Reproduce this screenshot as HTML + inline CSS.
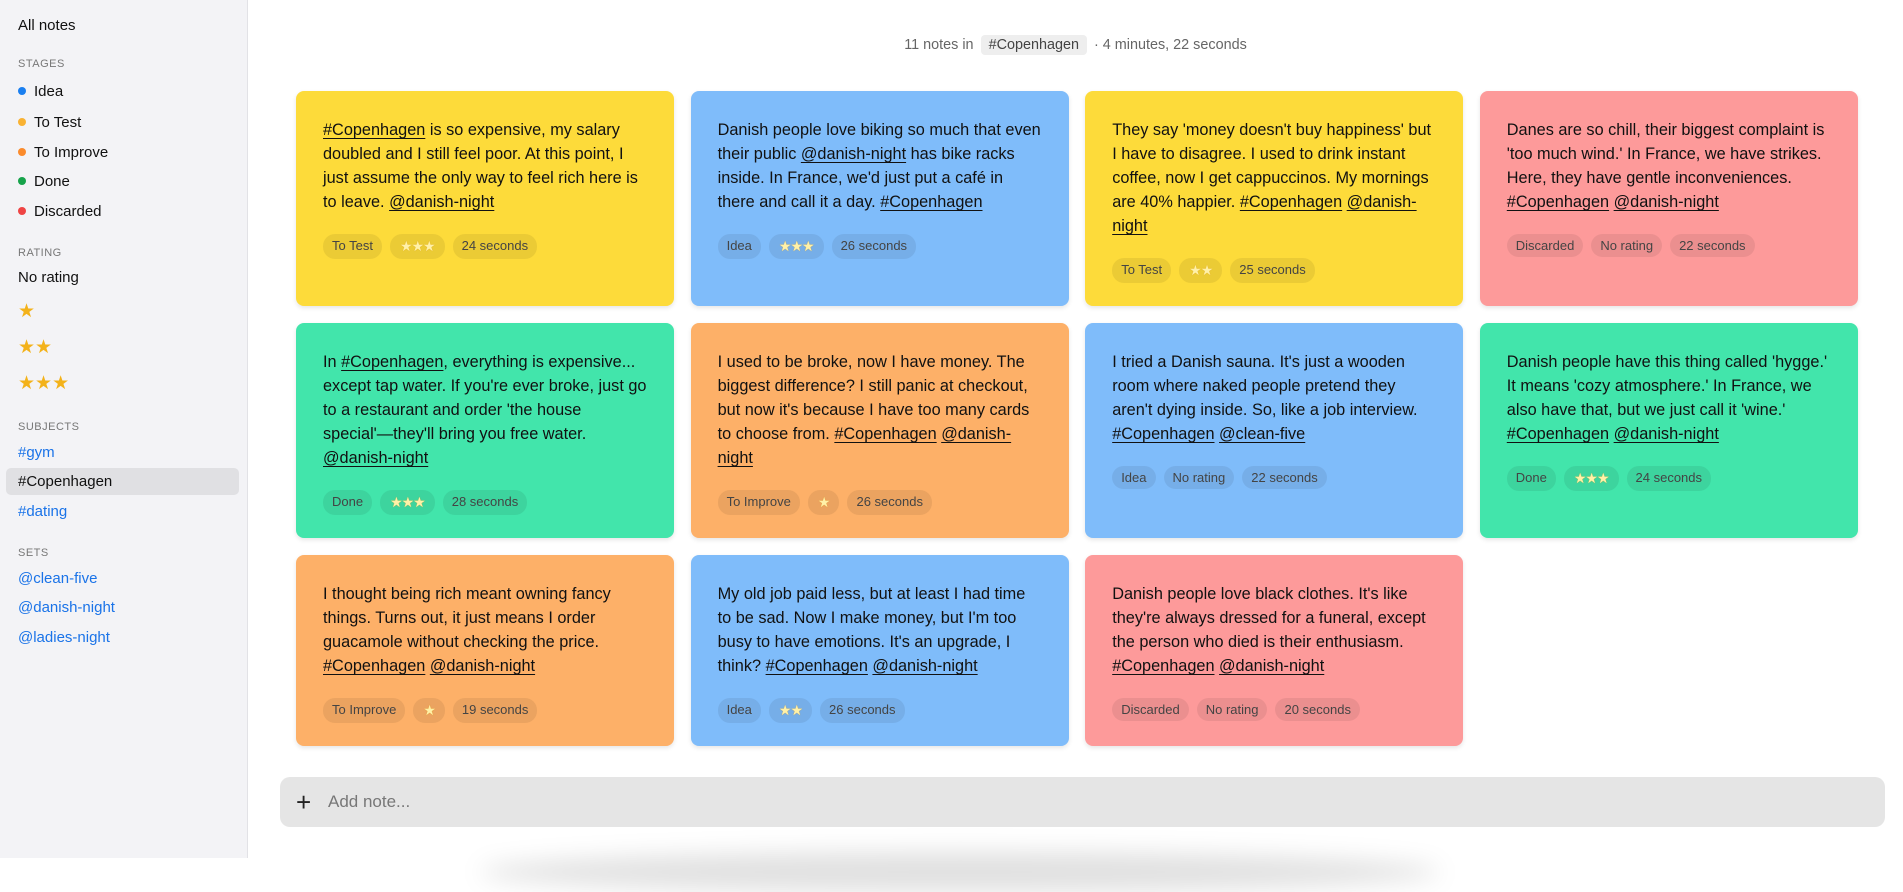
<!DOCTYPE html>
<html><head><meta charset="utf-8"><style>
*{box-sizing:border-box;margin:0;padding:0}
body{width:1903px;height:858px;overflow:hidden;background:#fff;font-family:"Liberation Sans",sans-serif;color:#111;position:relative}
#sb{position:absolute;left:0;top:0;width:248px;height:858px;background:#f3f3f6;border-right:1px solid #e2e2e6}
#sb div{position:absolute;left:18px;font-size:15px;line-height:20px;white-space:nowrap}
#sb .h{font-size:11px;color:#777;letter-spacing:.5px}
#sb .b{color:#1a73e8}
#sb .dot{display:inline-block;width:8px;height:8px;border-radius:50%;margin-right:8px;vertical-align:1px}
.st{color:#f3b21a}
#sb #sel{position:absolute;left:6px;top:468px;width:233px;height:27px;background:#e0e0e3;border-radius:5px}
#hd{position:absolute;left:248px;right:0;top:34px;text-align:center;font-size:14.4px;color:#666;line-height:22px}
#hd span{background:#eeeeee;color:#444;border-radius:4px;padding:2px 8px;margin:0 3px}
#grid{position:absolute;left:296px;top:91px;display:grid;grid-template-columns:repeat(4,378px);grid-template-rows:215px 215px 191px;column-gap:16.6px;row-gap:17px}
.c{border-radius:8px;padding:27px 27px;font-size:16.3px;line-height:24px;box-shadow:0 2px 5px rgba(0,0,0,.1)}
.c u{text-decoration:underline;text-underline-offset:3px}
.p{margin-top:20px;display:flex;gap:8px}
.p span{background:rgba(0,0,0,.07);border-radius:12px;font-size:13px;line-height:23px;padding:0 9px;color:#444}
.p span.s{color:#fff1a8;font-size:14px;padding:1px 10px;letter-spacing:-1px;text-shadow:0 0 1px #e0a020}
.y{background:#fddb3a}.bl{background:#7fbcfa}.r{background:#fd9a9a}.g{background:#42e5ab}.o{background:#fdb068}
#add{position:absolute;left:280px;top:777px;width:1605px;height:50px;background:#e5e5e5;border-radius:10px;font-size:17px;color:#777;line-height:50px;padding-left:48px}
#add b{position:absolute;left:16px;top:0;font-weight:normal;color:#222;font-size:26px}
#sh{position:absolute;left:480px;top:852px;width:960px;height:40px;border-radius:50%;background:rgba(0,0,0,.12);filter:blur(12px)}
</style></head><body>
<div id="sb">
<div id="sel"></div>
<div style="top:16px">All notes</div>
<div class="h" style="top:54px">STAGES</div>
<div style="top:82px"><i class="dot" style="background:#1a7ff0"></i>Idea</div>
<div style="top:113px"><i class="dot" style="background:#f9b233"></i>To Test</div>
<div style="top:143px"><i class="dot" style="background:#fb8b2c"></i>To Improve</div>
<div style="top:172px"><i class="dot" style="background:#16a34a"></i>Done</div>
<div style="top:202px"><i class="dot" style="background:#ef4444"></i>Discarded</div>
<div class="h" style="top:243px">RATING</div>
<div style="top:268px">No rating</div>
<div class="st" style="top:302px;font-size:19px">★</div>
<div class="st" style="top:338px;font-size:19px">★★</div>
<div class="st" style="top:374px;font-size:19px">★★★</div>
<div class="h" style="top:417px">SUBJECTS</div>
<div class="b" style="top:443px">#gym</div>
<div style="top:472px">#Copenhagen</div>
<div class="b" style="top:502px">#dating</div>
<div class="h" style="top:543px">SETS</div>
<div class="b" style="top:569px">@clean-five</div>
<div class="b" style="top:598px">@danish-night</div>
<div class="b" style="top:628px">@ladies-night</div>
</div>
<div id="hd">11 notes in <span>#Copenhagen</span> · 4 minutes, 22 seconds</div>
<div id="grid">
<div class="c y"><u>#Copenhagen</u> is so expensive, my salary doubled and I still feel poor. At this point, I just assume the only way to feel rich here is to leave. <u>@danish-night</u><div class="p"><span>To Test</span><span class="s">★★★</span><span>24 seconds</span></div></div>
<div class="c bl">Danish people love biking so much that even their public <u>@danish-night</u> has bike racks inside. In France, we'd just put a café in there and call it a day. <u>#Copenhagen</u><div class="p"><span>Idea</span><span class="s">★★★</span><span>26 seconds</span></div></div>
<div class="c y">They say 'money doesn't buy happiness' but I have to disagree. I used to drink instant coffee, now I get cappuccinos. My mornings are 40% happier. <u>#Copenhagen</u> <u>@danish-night</u><div class="p"><span>To Test</span><span class="s">★★</span><span>25 seconds</span></div></div>
<div class="c r">Danes are so chill, their biggest complaint is 'too much wind.' In France, we have strikes. Here, they have gentle inconveniences. <u>#Copenhagen</u> <u>@danish-night</u><div class="p"><span>Discarded</span><span>No rating</span><span>22 seconds</span></div></div>
<div class="c g">In <u>#Copenhagen</u>, everything is expensive... except tap water. If you're ever broke, just go to a restaurant and order 'the house special'—they'll bring you free water. <u>@danish-night</u><div class="p"><span>Done</span><span class="s">★★★</span><span>28 seconds</span></div></div>
<div class="c o">I used to be broke, now I have money. The biggest difference? I still panic at checkout, but now it's because I have too many cards to choose from. <u>#Copenhagen</u> <u>@danish-night</u><div class="p"><span>To Improve</span><span class="s">★</span><span>26 seconds</span></div></div>
<div class="c bl">I tried a Danish sauna. It's just a wooden room where naked people pretend they aren't dying inside. So, like a job interview. <u>#Copenhagen</u> <u>@clean-five</u><div class="p"><span>Idea</span><span>No rating</span><span>22 seconds</span></div></div>
<div class="c g">Danish people have this thing called 'hygge.' It means 'cozy atmosphere.' In France, we also have that, but we just call it 'wine.' <u>#Copenhagen</u> <u>@danish-night</u><div class="p"><span>Done</span><span class="s">★★★</span><span>24 seconds</span></div></div>
<div class="c o">I thought being rich meant owning fancy things. Turns out, it just means I order guacamole without checking the price. <u>#Copenhagen</u> <u>@danish-night</u><div class="p"><span>To Improve</span><span class="s">★</span><span>19 seconds</span></div></div>
<div class="c bl">My old job paid less, but at least I had time to be sad. Now I make money, but I'm too busy to have emotions. It's an upgrade, I think? <u>#Copenhagen</u> <u>@danish-night</u><div class="p"><span>Idea</span><span class="s">★★</span><span>26 seconds</span></div></div>
<div class="c r">Danish people love black clothes. It's like they're always dressed for a funeral, except the person who died is their enthusiasm. <u>#Copenhagen</u> <u>@danish-night</u><div class="p"><span>Discarded</span><span>No rating</span><span>20 seconds</span></div></div>
</div>
<div id="add"><b>+</b>Add note...</div>
<div id="sh"></div>
</body></html>
